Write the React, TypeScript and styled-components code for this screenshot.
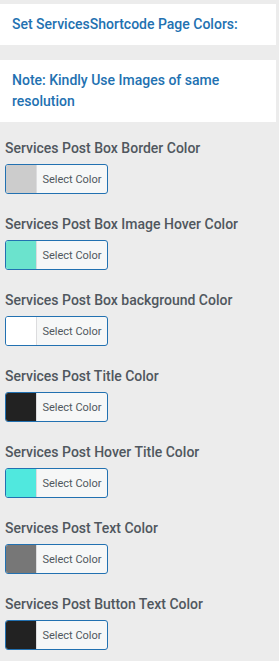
import React from 'react';
import styled, { createGlobalStyle } from 'styled-components';

const GlobalStyle = createGlobalStyle`
  html, body {
    margin: 0;
    padding: 0;
    background: #ececec;
  }
  body {
    font-family: Roboto, "Liberation Sans", sans-serif;
  }
`;

const Page = styled.div`
  width: 279px;
  padding-top: 4px;
  padding-bottom: 12px;
`;

const Notice = styled.div`
  width: 276px;
  box-sizing: border-box;
  background: #fff;
  padding: 10px 12px;
  margin-bottom: 15px;
  color: #2271b1;
  font-size: 14px;
  font-weight: 500;
  line-height: 21px;
`;

const Fields = styled.div`
  display: flex;
  flex-direction: column;
  gap: 20px;
  padding: 1px 5px 0;
`;

const Field = styled.div`
  display: flex;
  flex-direction: column;
  align-items: flex-start;
  gap: 6px;
`;

const Label = styled.div`
  color: #50575e;
  font-size: 14px;
  font-weight: 500;
  line-height: 20px;
`;

const ColorButton = styled.button`
  display: flex;
  align-items: stretch;
  width: 103px;
  height: 30px;
  padding: 0;
  border: 1px solid #2271b1;
  border-radius: 3px;
  background: #f6f7f7;
  overflow: hidden;
  cursor: pointer;
`;

const Swatch = styled.span<{ $color: string }>`
  width: 30px;
  flex: none;
  background: ${p => p.$color};
  border-right: 1px solid #dcdcde;
`;

const ButtonText = styled.span`
  flex: 1;
  display: flex;
  align-items: center;
  justify-content: center;
  color: #50575e;
  font-family: Roboto, "Liberation Sans", sans-serif;
  font-size: 11px;
`;

const fields = [
  { label: 'Services Post Box Border Color', color: '#cccccc' },
  { label: 'Services Post Box Image Hover Color', color: '#6be3cd' },
  { label: 'Services Post Box background Color', color: '#ffffff' },
  { label: 'Services Post Title Color', color: '#222222' },
  { label: 'Services Post Hover Title Color', color: '#50e8de' },
  { label: 'Services Post Text Color', color: '#777777' },
  { label: 'Services Post Button Text Color', color: '#222222' },
];

const App: React.FC = () => {
  return (
    <Page>
      <GlobalStyle />
      <Notice>Set ServicesShortcode Page Colors:</Notice>
      <Notice>Note: Kindly Use Images of same resolution</Notice>
      <Fields>
        {fields.map(f => (
          <Field key={f.label}>
            <Label>{f.label}</Label>
            <ColorButton type="button">
              <Swatch $color={f.color} />
              <ButtonText>Select Color</ButtonText>
            </ColorButton>
          </Field>
        ))}
      </Fields>
    </Page>
  );
};

export default App;
